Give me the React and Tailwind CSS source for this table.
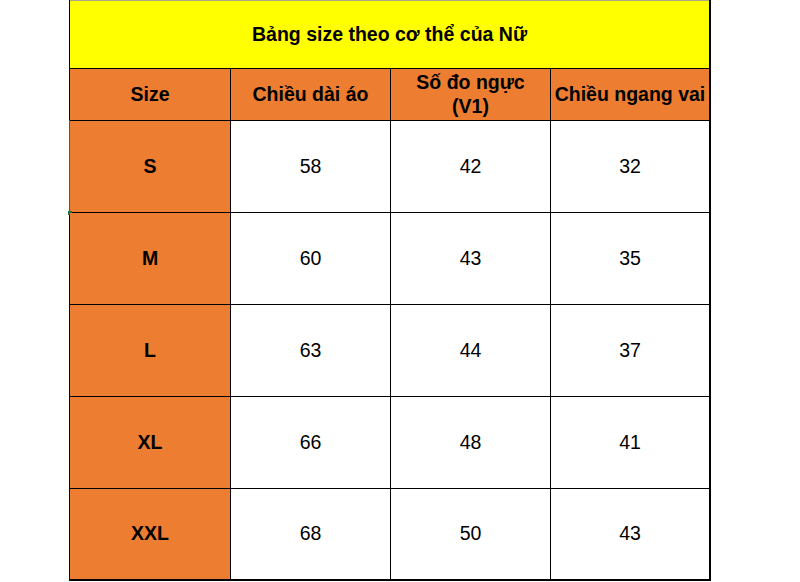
import React from 'react';

const rows = [
    { size: 'S', len: 58, chest: 42, shoulder: 32 },
    { size: 'M', len: 60, chest: 43, shoulder: 35 },
    { size: 'L', len: 63, chest: 44, shoulder: 37 },
    { size: 'XL', len: 66, chest: 48, shoulder: 41 },
    { size: 'XXL', len: 68, chest: 50, shoulder: 43 },
];

const App = () => {
    return (
        <div className="w-[800px] h-[582px] bg-white font-['Liberation_Sans',Arial,sans-serif] text-[19.5px] text-black">
            <div className="ml-[69px] w-[642px] border-l border-black border-r-2 border-b-2">
                {/* title row */}
                <div className="h-[69px] bg-[#ffff00] border-t border-t-[#a8a88a] border-b border-black flex items-center justify-center font-bold">
                    Bảng size theo cơ thể của Nữ
                </div>

                {/* header row */}
                <div className="grid grid-cols-[161px_160px_160px_158px] h-[52px] bg-[#ed7d31] font-bold border-b border-black">
                    <div className="border-r border-black flex items-center justify-center">Size</div>
                    <div className="border-r border-black flex items-center justify-center">Chiều dài áo</div>
                    <div className="border-r border-black flex flex-col items-center justify-center leading-[24px] pb-[2px]">
                        <span>Số đo ngực</span>
                        <span>(V1)</span>
                    </div>
                    <div className="flex items-center justify-center whitespace-nowrap">Chiều ngang vai</div>
                </div>

                {/* data rows */}
                {rows.map((r, i) => (
                    <div
                        key={r.size}
                        className={`grid grid-cols-[161px_160px_160px_158px] ${i === rows.length - 1 ? 'h-[90px]' : 'h-[92px] border-b border-black'}`}
                    >
                        <div className="relative bg-[#ed7d31] border-r border-black flex items-center justify-center font-bold">
                            {r.size}
                            {i === 0 && (
                                <>
                                    <span className="absolute -left-[1px] -top-[1px] w-[1px] h-[93px] bg-[#217346]"></span>
                                    <span className="absolute -left-[2px] -bottom-[3px] w-[4px] h-[4px] bg-[#217346]"></span>
                                </>
                            )}
                        </div>
                        <div className="border-r border-black flex items-center justify-center">{r.len}</div>
                        <div className="border-r border-black flex items-center justify-center">{r.chest}</div>
                        <div className="flex items-center justify-center">{r.shoulder}</div>
                    </div>
                ))}
            </div>
        </div>
    );
};

export default App;
